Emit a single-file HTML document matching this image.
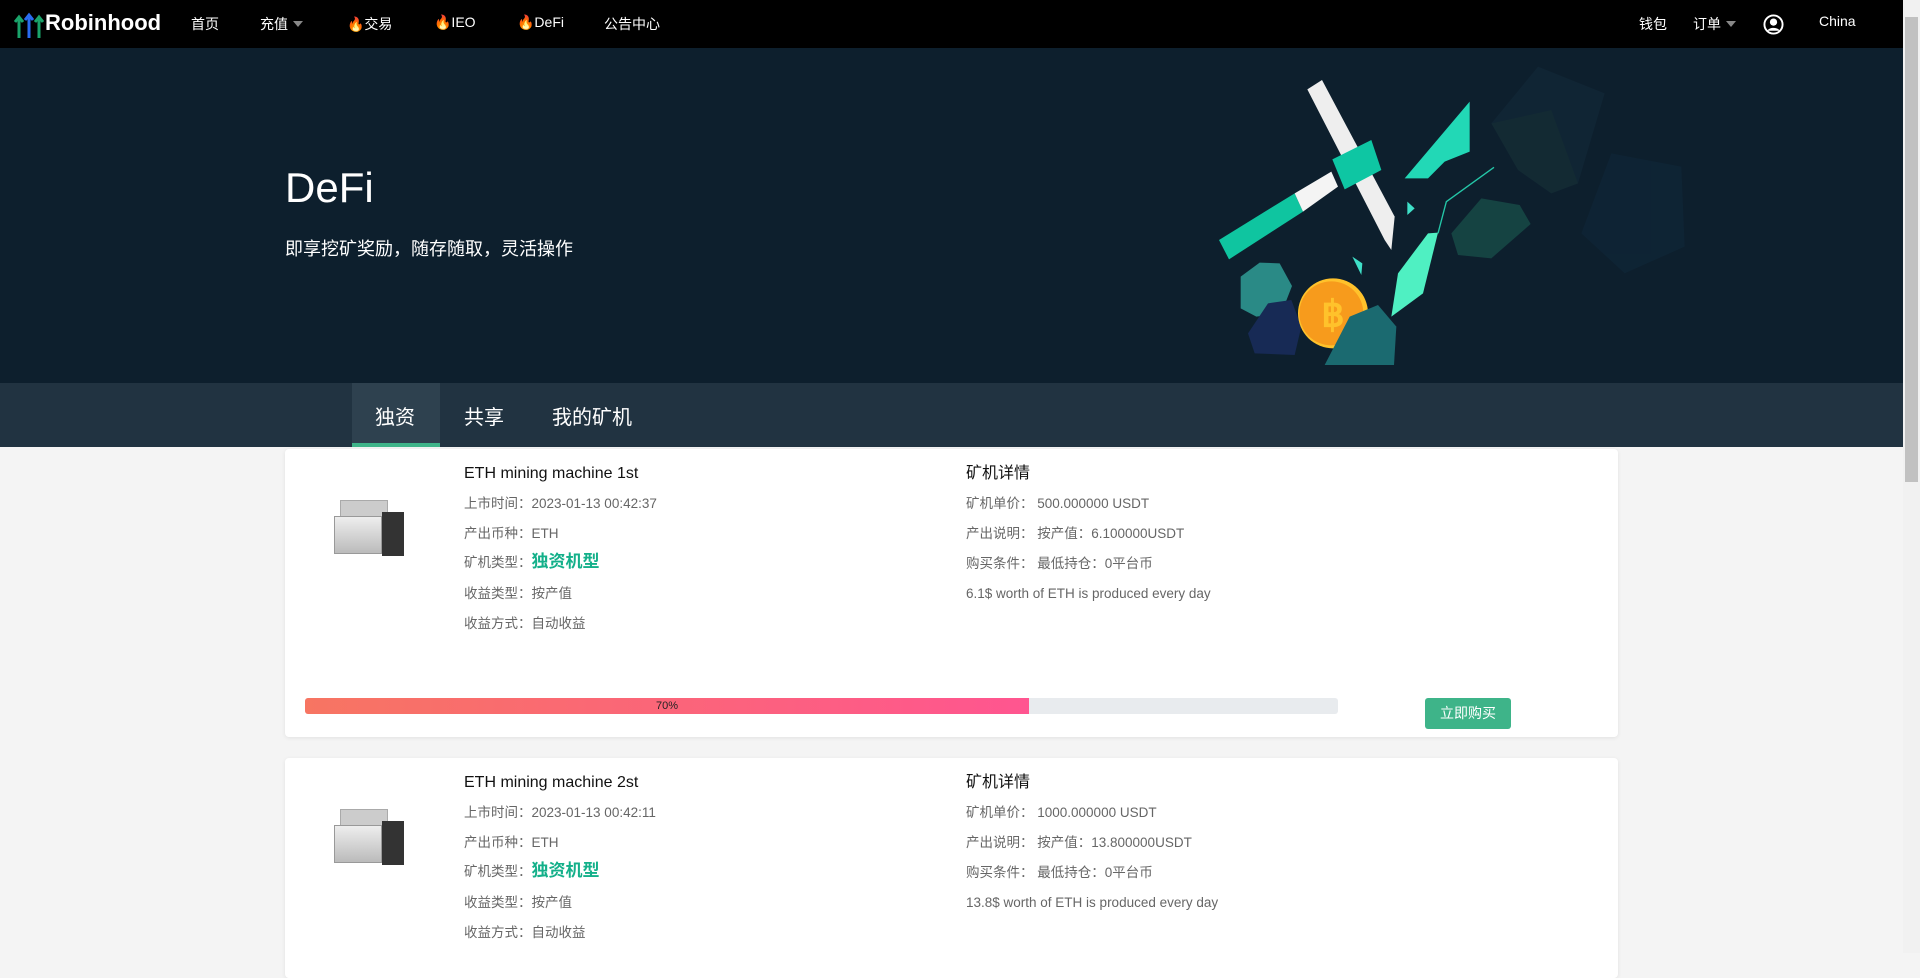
<!DOCTYPE html>
<html><head><meta charset="utf-8"><style>
*{margin:0;padding:0;box-sizing:border-box}
body{width:1920px;height:953px;overflow:hidden;background:#f4f4f4;font-family:"Liberation Sans","Noto Sans CJK SC",sans-serif;position:relative}
.nav{position:absolute;left:0;top:0;width:1903px;height:48px;background:#000;color:#fff;font-size:14px}
.nav span{position:absolute;top:14px;white-space:nowrap}
.tri{display:inline-block;width:0;height:0;border-left:5px solid transparent;border-right:5px solid transparent;border-top:6px solid #888;margin-left:5px;vertical-align:2px}
.hero{position:absolute;left:0;top:48px;width:1903px;height:335px;background:#0d1f2d;color:#fff}
.tabs{position:absolute;left:0;top:383px;width:1903px;height:64px;background:#213341;color:#fff;font-size:20px}
.tabs span{position:absolute;top:18px}
.card{position:absolute;left:285px;width:1333px;background:#fff;border-radius:4px;box-shadow:0 1px 4px rgba(0,0,0,.08)}
.t{position:absolute;font-size:13.5px;color:#666;white-space:nowrap;line-height:18px}
.h{position:absolute;font-size:16px;color:#111;white-space:nowrap;line-height:20px}
.g{color:#14b08a;font-size:17px;font-weight:bold}
.sb{position:absolute;right:0;top:0;width:17px;height:953px;background:#f1f1f1}
.miner{position:absolute;width:75px;height:70px}
</style></head><body>
<div class="nav">
<svg style="position:absolute;left:14px;top:12px" width="30" height="26" viewBox="0 0 30 26"><g stroke-width="3" fill="none"><path d="M5 26V6M1 10l4-5 4 5" stroke="#1aa36a"/><path d="M15 26V4M11 8l4-5 4 5" stroke="#2a6cf0"/><path d="M25 26V6M21 10l4-5 4 5" stroke="#1aa36a"/></g></svg>
<span style="left:45px;top:10px;font-size:22px;font-weight:bold">Robinhood</span>
<span style="left:191px">首页</span>
<span style="left:260px">充值<i class="tri"></i></span>
<span style="left:347px">🔥交易</span>
<span style="left:434px">🔥IEO</span>
<span style="left:517px">🔥DeFi</span>
<span style="left:604px">公告中心</span>
<span style="left:1639px">钱包</span>
<span style="left:1693px">订单<i class="tri"></i></span>
<svg style="position:absolute;left:1763px;top:14px" width="21" height="21" viewBox="0 0 22 22"><circle cx="11" cy="11" r="9.5" fill="none" stroke="#fff" stroke-width="2"/><circle cx="11" cy="8.5" r="3.8" fill="#fff"/><path d="M4.5 17.5c2-4 11-4 13 0" fill="#fff"/></svg>
<span style="left:1819px;top:13px">China</span>
</div>
<div class="hero">
<div style="position:absolute;left:285px;top:116px;font-size:42px">DeFi</div>
<div style="position:absolute;left:285px;top:187px;font-size:18px">即享挖矿奖励，随存随取，灵活操作</div>
<svg style="position:absolute;left:1198px;top:12px" width="560" height="320" viewBox="0 0 1680 960">
<g opacity=".55"><polygon points="1020,20 1220,100 1140,370 1060,400 960,330 880,190" fill="#142a3a"/><polygon points="1240,280 1450,320 1460,560 1280,640 1150,520" fill="#10283a"/><polygon points="880,190 1060,150 1140,370 1060,400 960,330" fill="#183339"/></g>
<polygon points="850,415 965,435 998,492 880,595 780,585 760,520" fill="#154342"/>
<polygon points="328,88 372,60 590,470 580,570 560,540" fill="#eee"/>
<polygon points="63,540 290,400 315,455 93,598" fill="#0fc5a0"/>
<polygon points="290,400 400,335 420,380 315,455" fill="#f4f4f4"/>
<polygon points="403,298 520,240 550,330 440,388" fill="#0ec6a3"/>
<polygon points="620,355 815,125 815,275 740,305 690,355" fill="#22d8b6"/>
<polygon points="580,770 600,640 690,520 720,518 675,700" fill="#4ff0c2"/>
<path d="M888,322 L745,425 L720,520" stroke="#24c7a8" stroke-width="4" fill="none"/>
<polygon points="628,425 650,445 628,465" fill="#3fe0c8"/>
<polygon points="463,590 493,610 490,645" fill="#3fe0c8"/>
<polygon points="128,650 185,608 245,610 282,678 250,760 175,770 128,745" fill="#2a8a86"/>
<polygon points="150,820 210,730 280,720 310,800 290,885 170,880" fill="#172a55"/>
<circle cx="405" cy="760" r="105" fill="#ffc22b"/><circle cx="400" cy="760" r="96" fill="#f79b1c"/>
<text x="405" y="800" font-size="110" font-weight="bold" fill="#ffc22b" text-anchor="middle" font-family="Liberation Sans">฿</text>
<polygon points="380,915 455,770 540,735 595,800 588,915" fill="#1b6a70"/>
</svg>
</div>
<div class="tabs">
<div style="position:absolute;left:352px;top:0;width:88px;height:64px;background:#2e414f;border-bottom:4px solid #3eb489"></div>
<span style="left:375px">独资</span><span style="left:464px">共享</span><span style="left:552px">我的矿机</span>
</div>

<div class="card" style="top:449px;height:288px">
<div class="miner" style="left:47px;top:45px"><div style="position:absolute;left:8px;top:6px;width:48px;height:28px;background:#ccc;border:1px solid #aaa"></div><div style="position:absolute;left:2px;top:22px;width:48px;height:38px;background:linear-gradient(#eee,#bbb);border:1px solid #999"></div><div style="position:absolute;left:50px;top:18px;width:22px;height:44px;background:#333"></div></div>
<div class="h" style="left:179px;top:15px">ETH mining machine 1st</div>
<div class="t" style="left:179px;top:46px">上市时间：2023-01-13 00:42:37</div>
<div class="t" style="left:179px;top:76px">产出币种：ETH</div>
<div class="t" style="left:179px;top:104px">矿机类型：<span class="g">独资机型</span></div>
<div class="t" style="left:179px;top:136px">收益类型：按产值</div>
<div class="t" style="left:179px;top:166px">收益方式：自动收益</div>
<div class="h" style="left:681px;top:15px">矿机详情</div>
<div class="t" style="left:681px;top:46px">矿机单价： 500.000000 USDT</div>
<div class="t" style="left:681px;top:76px">产出说明： 按产值：6.100000USDT</div>
<div class="t" style="left:681px;top:106px">购买条件： 最低持仓：0平台币</div>
<div class="t" style="left:681px;top:136px">6.1$ worth of ETH is produced every day</div>
<div style="position:absolute;left:20px;top:249px;width:1033px;height:16px;background:#e8ebee;border-radius:3px;overflow:hidden"><div style="width:724px;height:16px;background:linear-gradient(90deg,#f77562,#ff5590);text-align:center;font-size:11px;line-height:16px;color:#222">70%</div></div>
<div style="position:absolute;left:1140px;top:249px;width:86px;height:31px;background:#3eb489;border-radius:3px;color:#fff;font-size:14px;text-align:center;line-height:31px">立即购买</div>
</div>

<div class="card" style="top:758px;height:220px">
<div class="miner" style="left:47px;top:45px"><div style="position:absolute;left:8px;top:6px;width:48px;height:28px;background:#ccc;border:1px solid #aaa"></div><div style="position:absolute;left:2px;top:22px;width:48px;height:38px;background:linear-gradient(#eee,#bbb);border:1px solid #999"></div><div style="position:absolute;left:50px;top:18px;width:22px;height:44px;background:#333"></div></div>
<div class="h" style="left:179px;top:15px">ETH mining machine 2st</div>
<div class="t" style="left:179px;top:46px">上市时间：2023-01-13 00:42:11</div>
<div class="t" style="left:179px;top:76px">产出币种：ETH</div>
<div class="t" style="left:179px;top:104px">矿机类型：<span class="g">独资机型</span></div>
<div class="t" style="left:179px;top:136px">收益类型：按产值</div>
<div class="t" style="left:179px;top:166px">收益方式：自动收益</div>
<div class="h" style="left:681px;top:15px">矿机详情</div>
<div class="t" style="left:681px;top:46px">矿机单价： 1000.000000 USDT</div>
<div class="t" style="left:681px;top:76px">产出说明： 按产值：13.800000USDT</div>
<div class="t" style="left:681px;top:106px">购买条件： 最低持仓：0平台币</div>
<div class="t" style="left:681px;top:136px">13.8$ worth of ETH is produced every day</div>
</div>
<div class="sb"><div style="position:absolute;left:2px;top:17px;width:13px;height:465px;background:#c1c1c1"></div></div>
</body></html>
